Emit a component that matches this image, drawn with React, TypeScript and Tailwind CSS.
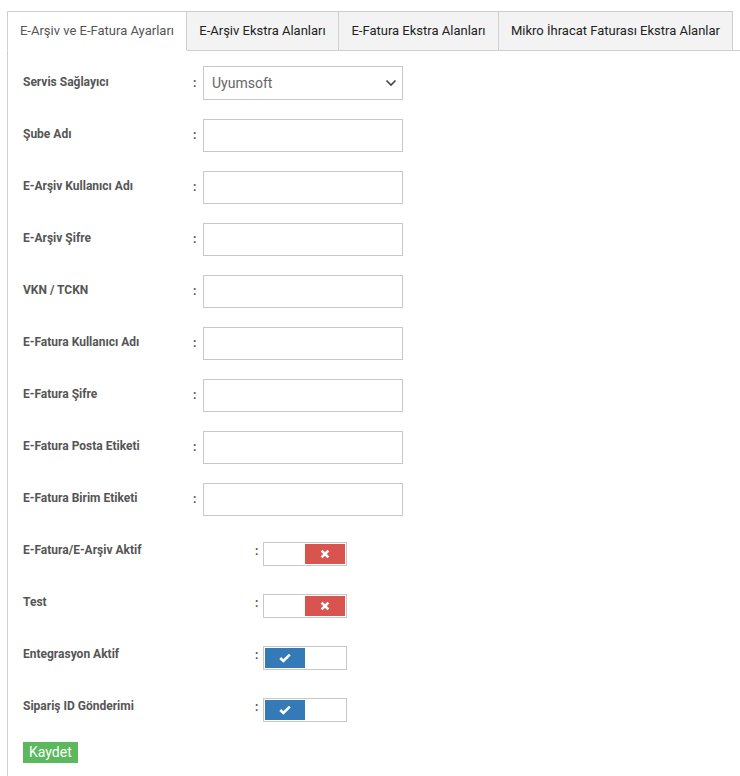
import React, { useState } from "react";

const fields = [
  "Şube Adı",
  "E-Arşiv Kullanıcı Adı",
  "E-Arşiv Şifre",
  "VKN / TCKN",
  "E-Fatura Kullanıcı Adı",
  "E-Fatura Şifre",
  "E-Fatura Posta Etiketi",
  "E-Fatura Birim Etiketi",
];

const tabs = [
  { label: "E-Arşiv ve E-Fatura Ayarları", w: "w-[180px]" },
  { label: "E-Arşiv Ekstra Alanları", w: "w-[152px]" },
  { label: "E-Fatura Ekstra Alanları", w: "w-[160px]" },
  { label: "Mikro İhracat Faturası Ekstra Alanlar", w: "w-[234px]" },
];

const Toggle = ({ on }: { on: boolean }) => (
  <div className="w-[84px] h-[24px] border border-[#c8c8c8] p-[1px] flex bg-white">
    {on ? (
      <div className="w-[40px] h-full bg-[#337ab7] flex items-center justify-center">
        <svg width="12" height="10" viewBox="0 0 12 10">
          <path d="M1.2 5 L4.4 8 L10.8 1.6" stroke="white" strokeWidth="2.6" fill="none" />
        </svg>
      </div>
    ) : (
      <div className="w-[40px] h-full bg-[#d9534f] ml-auto flex items-center justify-center">
        <svg width="10" height="10" viewBox="0 0 10 10">
          <path d="M1.6 1.6 L8.4 8.4 M8.4 1.6 L1.6 8.4" stroke="white" strokeWidth="2.6" fill="none" />
        </svg>
      </div>
    )}
  </div>
);

const App: React.FC = () => {
  const [active] = useState(0);

  return (
    <div className="w-[740px] h-[776px] bg-white overflow-hidden font-['Roboto',sans-serif]">
      <div className="ml-[7px] pt-[11px]">
        {/* tabs */}
        <div className="flex h-[40px]">
          {tabs.map((t, i) => (
            <div
              key={t.label}
              className={`${t.w} h-[40px] flex items-center justify-center text-[13px] border-t border-r border-[#cfcfcf] ${
                i === 0 ? "border-l" : ""
              } ${
                i === active
                  ? "bg-white text-[#555] border-b border-b-white"
                  : "bg-[#f3f3f3] text-[#222] border-b"
              }`}
            >
              {t.label}
            </div>
          ))}
          <div className="flex-1 border-b border-[#cfcfcf]" />
        </div>

        {/* pane */}
        <div className="border-l border-[#cfcfcf] h-[725px] pl-[15px] pt-[15px]">
          <div className="flex h-[53px]">
            <div className="w-[170px] pt-[8px] text-[12px] leading-[16px] font-bold text-[#555]">
              Servis Sağlayıcı
            </div>
            <div className="w-[10px] pt-[9px] text-[12px] leading-[16px] font-bold text-[#555]">:</div>
            <div className="w-[200px] h-[34px] border border-[#c8c8c8] flex items-center justify-between pl-[8px] pr-[5px] text-[14px] text-[#666]">
              <span>Uyumsoft</span>
              <svg width="12" height="8" viewBox="0 0 12 8">
                <path d="M1.5 1.5 L6 6 L10.5 1.5" stroke="#444" strokeWidth="1.6" fill="none" />
              </svg>
            </div>
          </div>

          {fields.map((f) => (
            <div key={f} className="flex h-[52px]">
              <div className="w-[170px] pt-[7px] text-[12px] leading-[16px] font-bold text-[#555]">{f}</div>
              <div className="w-[10px] pt-[8px] text-[12px] leading-[16px] font-bold text-[#555]">:</div>
              <div className="w-[200px] h-[33px] border border-[#c8c8c8]" />
            </div>
          ))}

          {[
            { label: "E-Fatura/E-Arşiv Aktif", on: false },
            { label: "Test", on: false },
            { label: "Entegrasyon Aktif", on: true },
            { label: "Sipariş ID Gönderimi", on: true },
          ].map((r) => (
            <div key={r.label} className="flex h-[52px] pt-[7px]">
              <div className="w-[232px] text-[12px] leading-[16px] font-bold text-[#555]">{r.label}</div>
              <div className="w-[8px] pt-[1px] text-[12px] leading-[16px] font-bold text-[#555]">:</div>
              <Toggle on={r.on} />
            </div>
          ))}

          <button className="block mt-[-1px] h-[21px] px-[6px] bg-[#5cb85c] text-white text-[14px] leading-[21px]">
            Kaydet
          </button>
        </div>
      </div>
    </div>
  );
};

export default App;
